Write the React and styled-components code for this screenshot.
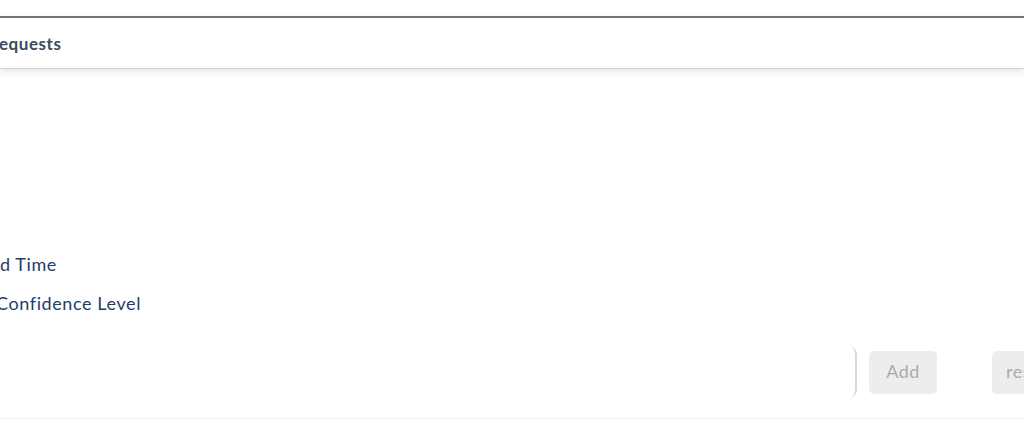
import React from "react";
import styled, { createGlobalStyle } from "styled-components";

const Global = createGlobalStyle`
  html, body { margin: 0; padding: 0; background: #ffffff; }
  body { width: 1024px; height: 434px; overflow: hidden; font-family: "Lato", "Noto Sans", sans-serif; }
`;

const Page = styled.div`
  width: 1024px;
  height: 434px;
  overflow: hidden;
  padding-top: 16px;
  box-sizing: border-box;
  display: flex;
  flex-direction: column;
`;

const Header = styled.header`
  height: 52px;
  box-sizing: border-box;
  border-top: 2px solid #707476;
  background: #ffffff;
  box-shadow: 0 3px 7px rgba(180, 182, 200, 0.4), 0 1px 0 #dcdde5;
  display: flex;
  align-items: center;
  position: relative;
  z-index: 1;
`;

const Title = styled.h2`
  margin: 0 0 0 -12px;
  font-size: 17px;
  font-weight: 700;
  color: #3b4a5a;
  letter-spacing: 0.55px;
`;

const Body = styled.main`
  flex: 1;
  display: flex;
  flex-direction: column;
  padding-top: 185px;
`;

const Options = styled.ul`
  list-style: none;
  margin: 0;
  padding: 0;
  display: flex;
  flex-direction: column;
  gap: 16px;
`;

const Option = styled.li`
  margin-left: ${(p) => p.$shift || 0}px;
  font-size: 18px;
  line-height: 23px;
  letter-spacing: 0.6px;
  color: #1f3d6a;
`;

const FormRow = styled.div`
  margin-top: 32px;
  display: flex;
  align-items: center;
  height: 50px;
`;

const Input = styled.div`
  flex: 0 0 857px;
  height: 50px;
  box-sizing: border-box;
  border: none;
  border-right: 2px solid #d6d9e2;
  border-radius: 0 7px 7px 0;
`;

const Button = styled.button`
  flex: 0 0 auto;
  margin-left: ${(p) => p.$gap}px;
  width: 68px;
  height: 43px;
  border: none;
  border-radius: 5px;
  background: #ededed;
  color: #ababab;
  font-family: "Lato", "Noto Sans", sans-serif;
  font-size: 18px;
  letter-spacing: 0.5px;
  padding: 0 0 2px;
  text-align: ${(p) => p.$align || "center"};
  padding-left: ${(p) => (p.$align === "left" ? "14px" : "0")};
`;

const Divider = styled.hr`
  margin: 21px 0 0;
  border: none;
  border-top: 1px solid #f0f0f0;
`;

export default function App() {
  return (
    <>
      <Global />
      <Page>
        <Header>
          <Title>Requests</Title>
        </Header>
        <Body>
          <Options>
            <Option>d Time</Option>
            <Option $shift={-4}>Confidence Level</Option>
          </Options>
          <FormRow>
            <Input />
            <Button $gap={12}>Add</Button>
            <Button $gap={55} $align="left">reset</Button>
          </FormRow>
          <Divider />
        </Body>
      </Page>
    </>
  );
}
